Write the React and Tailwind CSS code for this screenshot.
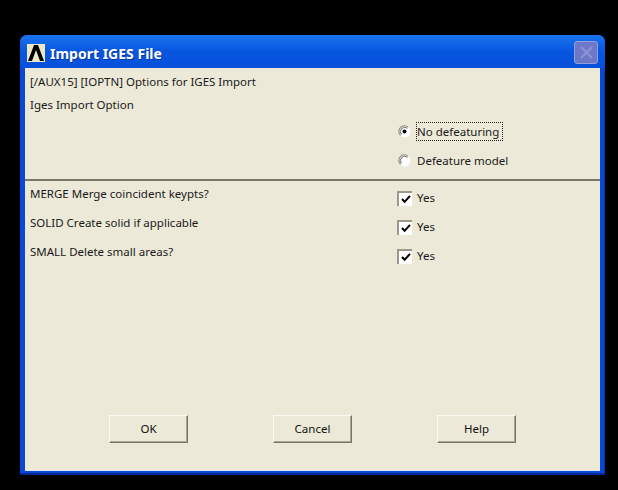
function Radio({ checked }) {
  return (
    <svg width="13" height="13" viewBox="0 0 13 13" className="shrink-0">
      <circle cx="6.5" cy="6.5" r="6" fill="#ffffff" />
      <path d="M10.2 2.3A5.5 5.5 0 0 0 2.6 10.4" fill="none" stroke="#8a8778" strokeWidth="1.1" />
      <path d="M9.4 3.3A4.3 4.3 0 0 0 3.4 9.4" fill="none" stroke="#55544c" strokeWidth="0.9" />
      {checked && <circle cx="6.5" cy="6.5" r="2" fill="#000000" />}
    </svg>
  );
}

function Check() {
  return (
    <span className="flex h-[15px] w-[15px] shrink-0 items-center justify-center border-t-2 border-l-2 border-t-[#9b998c] border-l-[#9b998c] bg-white">
      <svg width="10" height="10" viewBox="0 0 10 10">
        <path d="M1 5 L3.6 7.8 L9 1.8" fill="none" stroke="#000000" strokeWidth="2" />
      </svg>
    </span>
  );
}

function Btn({ children }) {
  return (
    <button className="h-[28px] w-[79px] border border-t-[#fbfaf4] border-l-[#fbfaf4] border-r-[#77756a] border-b-[#77756a] bg-[#ece9d8] text-center text-[11.5px] text-[#111] shadow-[inset_-1px_-1px_0_#a9a698]">
      {children}
    </button>
  );
}

function Row({ label }) {
  return (
    <div className="flex h-[29px] items-start">
      <span className="w-[367px] pt-[4px]">{label}</span>
      <span className="flex items-center gap-[5px] pt-[8px]">
        <Check />
        <span>Yes</span>
      </span>
    </div>
  );
}

export default function App() {
  return (
    <div className="h-[490px] w-[618px] overflow-hidden bg-black pt-[35px] pl-[20px] font-['Noto_Sans',sans-serif] text-[11.5px] leading-[16px] text-[#1a1a1a]">
      <div className="flex h-[440px] w-[585px] flex-col rounded-t-[7px] bg-[#0a48d8] shadow-[inset_0_-2px_0_#04289a,inset_-1px_0_0_#0838b0]">
        <div className="flex h-[33px] shrink-0 items-center rounded-t-[7px] bg-gradient-to-b from-[#1a74ee] via-[#0856e0] to-[#0650dc] pt-[2px] pr-[7px] pl-[7px]">
          <svg width="18" height="18" viewBox="0 0 18 18" className="shrink-0">
            <rect width="18" height="18" fill="#efe8c4" />
            <path d="M1 17 L7 1 H11 L17 17 H13 L9 6 L5 17 Z" fill="#000000" />
          </svg>
          <span className="ml-[5px] pt-[2px] text-[14px] font-bold text-white [text-shadow:1px_1px_0_#063a9c]">
            Import IGES File
          </span>
          <span className="ml-auto flex h-[23px] w-[24px] items-center justify-center rounded-[3px] border border-[#8fa0dc] bg-[#6d78c6]">
            <svg width="15" height="15" viewBox="0 0 15 15">
              <path d="M2 2 L13 13 M13 2 L2 13" stroke="#8d94d6" strokeWidth="2" />
            </svg>
          </span>
        </div>
        <div className="mx-[5px] mb-[5px] flex min-h-0 flex-1 flex-col bg-[#ece9d8] shadow-[0_1px_0_#dfe6f2]">
          <div className="flex flex-col px-[5px] pt-[6px]">
            <div className="h-[23px]">[/AUX15] [IOPTN] Options for IGES Import</div>
            <div className="h-[20px]">Iges Import Option</div>
          </div>
          <div className="flex flex-col pl-[373px]">
            <div className="flex h-[29px] items-center gap-[5px]">
              <Radio checked />
              <span className="flex h-[19px] w-[87px] items-center border border-dotted border-[#222]">No defeaturing</span>
            </div>
            <div className="flex h-[29px] items-center gap-[6px]">
              <Radio />
              <span>Defeature model</span>
            </div>
          </div>
          <div className="mt-[4px] h-[2px] bg-[#77766a]" />
          <div className="flex flex-col px-[5px] pt-[1px]">
            <Row label="MERGE Merge coincident keypts?" />
            <Row label="SOLID Create solid if applicable" />
            <Row label="SMALL Delete small areas?" />
          </div>
          <div className="mt-auto mb-[27px] flex justify-between px-[84px]">
            <Btn>OK</Btn>
            <Btn>Cancel</Btn>
            <Btn>Help</Btn>
          </div>
        </div>
      </div>
    </div>
  );
}
